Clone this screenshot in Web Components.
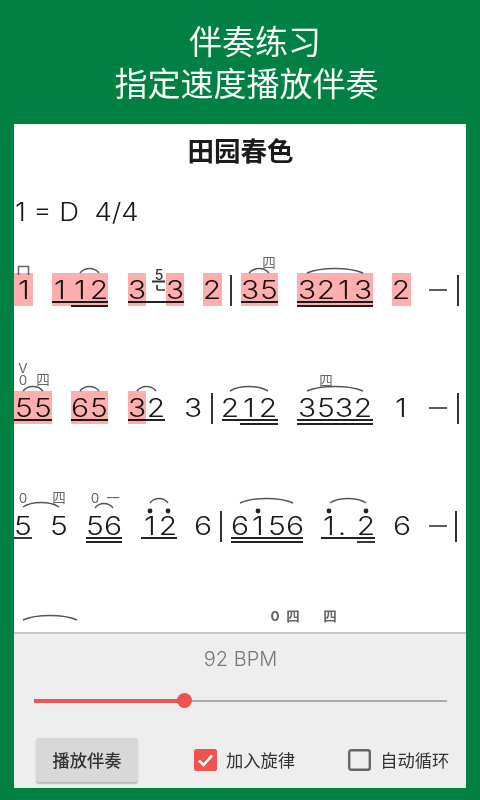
<!DOCTYPE html>
<html lang="zh"><head><meta charset="utf-8"><title>伴奏练习</title>
<style>html,body{margin:0;padding:0;background:#008043}body{width:480px;height:800px;overflow:hidden}</style></head>
<body><practice-app></practice-app>
<template id="t-app"><style>
:host{display:flex;flex-direction:column;width:480px;height:800px;background:#008043;font-family:Inter,"Noto Sans CJK SC",sans-serif}
main{flex:1;margin:0 14px 12px;display:flex;flex-direction:column;min-height:0}
</style>
<promo-header><span class="a">伴奏练习</span><span class="b">指定速度播放伴奏</span></promo-header>
<main><score-sheet></score-sheet><control-panel></control-panel></main></template>
<template id="t-header"><style>
:host{display:flex;flex-direction:column;align-items:center;height:124px;box-sizing:border-box;padding-top:20px;color:#f4faf6;font:400 33px/41.5px "Noto Sans CJK SC",sans-serif}
::slotted(span){display:block}
::slotted(.a){margin-left:30px}
::slotted(.b){margin-left:13px}
</style><slot></slot></template>
<script>
const CJK='"Noto Sans CJK SC",sans-serif';
function tpl(el,id){el.attachShadow({mode:'open'}).append(document.getElementById(id).content.cloneNode(true));}
class PracticeApp extends HTMLElement{constructor(){super();tpl(this,'t-app');}}
class PromoHeader extends HTMLElement{constructor(){super();tpl(this,'t-header');}}
const OX=14,OY=124;
const rows=[
 {y:290,digits:[[23.5,'1'],[60,'1'],[80,'1'],[99,'2'],[137,'3'],[175,'3'],[212,'2'],[250,'3'],[269,'5'],[307,'3'],[326,'2'],[344,'1'],[363,'3'],[401,'2']],
  hi:[[14,33],[52,108],[128,146],[166,184],[203,222],[241,278],[297,373],[392,411]],
  ul:[[52,108,302],[71,108,306],[128,184,302],[241,278,302],[297,373,302],[297,373,306]],
  bars:[231,458],dash:1,barTop:275,barBot:306,
  slurs:[[80,99,273],[249,269,273],[307,363,273]]},
 {y:408,digits:[[23.5,'5'],[42.5,'5'],[80,'6'],[99,'5'],[137,'3'],[156,'2'],[193,'3'],[230,'2'],[249,'1'],[268,'2'],[307,'3'],[326,'5'],[344,'3'],[363,'2'],[401,'1']],
  hi:[[14,52],[71,108],[128,146]],
  ul:[[14,52,420],[71,108,420],[128,165,420],[222,278,420],[240,278,424],[297,373,420],[297,373,424]],
  bars:[212,458],dash:1,barTop:393,barBot:424,
  slurs:[[23,43,391],[80,99,391],[137,156,391],[230,268,391],[307,363,391]]},
 {y:526,digits:[[23,'5'],[59,'5'],[95,'5'],[113,'6'],[150,'1'],[168,'2'],[203,'6'],[240,'6'],[258,'1'],[277,'5'],[295,'6'],[329,'1'],[342,'.'],[366,'2'],[402,'6']],
  hi:[],
  ul:[[14,32,538],[86,122,538],[86,122,542],[141,177,538],[231,303,538],[231,303,542],[321,375,538],[357,375,542]],
  bars:[221,456],dash:1,barTop:511,barBot:542,
  dots:[[150,511],[168,511],[258,511],[329,511],[366,511]],
  slurs:[[23,59,507],[95,113,508],[150,168,503],[240,293,503],[330,366,503]]},
 {y:0,digits:[],hi:[],ul:[],bars:[],slurs:[[23,77,620]]}
];
const marks=[[269,263,'四'],[23,368,'V'],[23,380,'0'],[43,380,'四'],[326,381,'四'],
 [23,498,'0'],[59,498,'四'],[95,498,'0'],[113,498,'一'],[275,616,'0',1],[293,616,'四',1],[330,616,'四',1]];
class ScoreSheet extends HTMLElement{constructor(){super();
 const s=this.attachShadow({mode:'open'});
 let lines='',html='';
 for(const r of rows){
  for(const [a,b] of r.hi) html+=`<i class="hi" style="left:${a-OX}px;top:${r.y-17-OY}px;width:${b-a}px"></i>`;
  for(const [x,d] of r.digits) html+=`<span class="d" style="left:${x-OX-12}px;top:${r.y-OY-16}px">${d}</span>`;
  for(const [a,b,y] of r.ul) lines+=`<path d="M${a} ${y}H${b}" stroke="#222" stroke-width="1.8"/>`;
  for(const x of r.bars) lines+=`<path d="M${x} ${r.barTop}V${r.barBot}" stroke="#333" stroke-width="2"/>`;
  if(r.dash) lines+=`<path d="M429 ${r.y}H447" stroke="#333" stroke-width="1.6"/>`;
  for(const [a,b,y] of r.slurs){const h=5;lines+=`<path d="M${a} ${y}C${a+(b-a)*.25} ${y-h-1} ${a+(b-a)*.75} ${y-h-1} ${b} ${y}" fill="none" stroke="#555" stroke-width="1.5"/>`;}
  for(const [x,y] of r.dots||[]) lines+=`<circle cx="${x}" cy="${y}" r="2.4" fill="#222"/>`;
 }
 for(const [x,y,t,b] of marks) html+=`<span class="m${b?' b':''}" style="left:${x-OX-10}px;top:${y-OY-6}px">${t}</span>`;
 html+=`<span class="g" style="left:${159-OX-8}px;top:${275-OY-7}px">5</span>`;
 lines+=`<path d="M18.5 275V266.5H28.5V275" fill="none" stroke="#666" stroke-width="1.5"/>`;
 lines+=`<path d="M152 281.5H165" stroke="#333" stroke-width="2"/><path d="M157 285V288.5Q157 290 159 290H165" fill="none" stroke="#333" stroke-width="1.7"/>`;
 s.innerHTML=`<style>
 :host{display:block;position:relative;height:508px;flex:none;background:#fff;overflow:hidden;font-family:Inter,${CJK}}
 h1{margin:0;padding-top:8px;padding-left:1px;text-align:center;font:700 26.5px/36px ${CJK};color:#1a1a1a}
 .key{margin:26px 0 0 1px;font:350 25px/36px Inter,sans-serif;color:#1a1a1a;white-space:pre;transform:scaleX(1.1);transform-origin:left center}
 .canvas{position:absolute;inset:0}
 svg{position:absolute;left:0;top:0;width:452px;height:508px}
 .d{position:absolute;width:24px;text-align:center;font:350 25px/32px Inter,sans-serif;color:#1a1a1a;transform:scaleX(1.2)}
 .m{position:absolute;width:20px;height:12px;text-align:center;font:400 13.5px/12px Inter,${CJK};color:#666}
 .m.b{font-weight:700}
 .g{position:absolute;width:16px;height:14px;text-align:center;font:500 14px/14px Inter,sans-serif;color:#333}
 .hi{position:absolute;height:33px;background:#ffaeae;mix-blend-mode:multiply;z-index:2}
 </style>
 <h1>田园春色</h1><div class="key">1 = D  4/4</div>
 <div class="canvas">${html}<svg viewBox="${OX} ${OY} 452 508">${lines}</svg></div>`;
}}
class BpmSlider extends HTMLElement{constructor(){super();
 this.attachShadow({mode:'open'}).innerHTML=`<style>
 :host{display:block;position:relative;height:18px;margin:0 19px 0 20px}
 .t{position:absolute;left:0;right:0;top:8px;height:2px;background:#ababab}
 .a{position:absolute;left:0;top:7px;height:4px;width:150px;background:#ef5350}
 .k{position:absolute;left:143px;top:1px;width:15px;height:15px;border-radius:50%;background:#ef5350}
 </style><div class="t"></div><div class="a"></div><div class="k"></div>`;}}
class RaisedButton extends HTMLElement{constructor(){super();
 this.attachShadow({mode:'open'}).innerHTML=`<style>
 :host{display:flex;align-items:center;justify-content:center;width:102px;height:44px;box-sizing:border-box;background:#d8d8d8;border-radius:3px;box-shadow:0 1.5px 1.5px rgba(0,0,0,.22);color:#333;font:500 17.3px/1 ${CJK}}
 </style><slot></slot>`;}}
class CheckOption extends HTMLElement{constructor(){super();
 const on=this.hasAttribute('checked');
 this.attachShadow({mode:'open'}).innerHTML=`<style>
 :host{display:inline-flex;align-items:center;gap:9px;color:#333;font:400 17.3px/1 ${CJK}}
 svg{width:23px;height:22px;flex:none;display:block}
 </style><svg viewBox="0 0 23 22">${on?
 '<rect width="23" height="22" rx="2.5" fill="#ef5350"/><path d="M5 11.5L9.6 16L18 6.5" fill="none" stroke="#fff" stroke-width="2.6"/>':
 '<rect x="1.2" y="1.2" width="20.6" height="19.6" rx="2" fill="none" stroke="#666" stroke-width="2.4"/>'}</svg><slot></slot>`;}}
class ControlPanel extends HTMLElement{constructor(){super();
 this.attachShadow({mode:'open'}).innerHTML=`<style>
 :host{display:flex;flex-direction:column;flex:1;background:#eee;border-top:2px solid #c8c8c8}
 .bpm{margin-top:13px;text-align:center;font:300 20px/24px Inter,sans-serif;color:#777;padding-left:1px}
 bpm-slider{margin-top:21px}
 .row{display:flex;align-items:center;margin-top:28px;padding-left:22px}
 check-option.a{margin-left:56px}
 check-option.b{margin-left:53px}
 </style>
 <div class="bpm">92 BPM</div><bpm-slider></bpm-slider>
 <div class="row"><raised-button>播放伴奏</raised-button><check-option class="a" checked>加入旋律</check-option><check-option class="b">自动循环</check-option></div>`;}}
customElements.define('bpm-slider',BpmSlider);
customElements.define('raised-button',RaisedButton);
customElements.define('check-option',CheckOption);
customElements.define('control-panel',ControlPanel);
customElements.define('score-sheet',ScoreSheet);
customElements.define('promo-header',PromoHeader);
customElements.define('practice-app',PracticeApp);
</script></body></html>
